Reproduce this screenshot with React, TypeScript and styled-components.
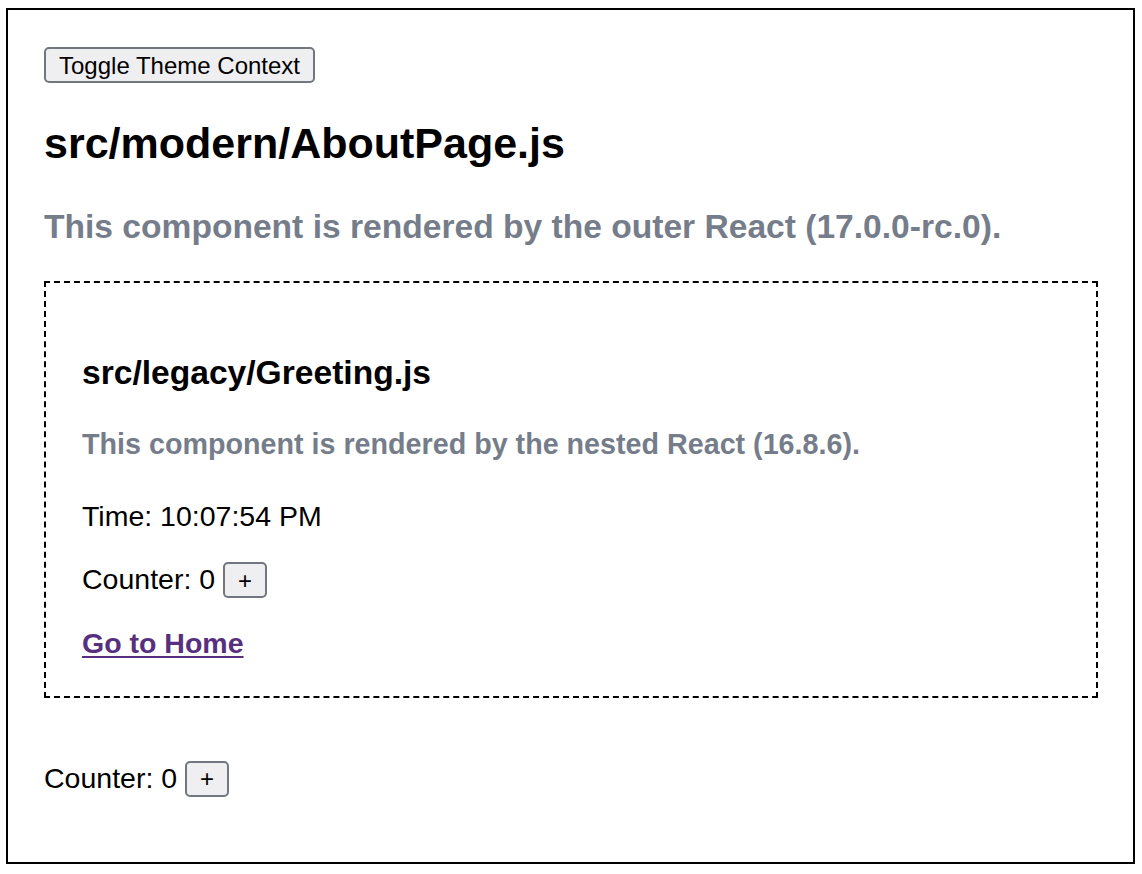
import React, { useState } from "react";
import styled, { createGlobalStyle } from "styled-components";

const GlobalStyle = createGlobalStyle`
  html, body {
    margin: 0;
    padding: 0;
    background: #ffffff;
  }
  body {
    font-family: "Liberation Sans", Arial, Helvetica, sans-serif;
    color: #000000;
  }
`;

const Frame = styled.div`
  box-sizing: border-box;
  width: 1129px;
  margin: 8px 0 0 6px;
  border: 2px solid #000000;
  padding: 36px 35px 37px 36px;
  font-size: 28.5px;
  line-height: 33px;
`;

const Toolbar = styled.div`
  display: flex;
  margin-top: 1px;
`;

const NativeButton = styled.button<{ $size?: "wide" | "small" }>`
  box-sizing: border-box;
  height: 36px;
  padding: 0 13px;
  font-family: "Liberation Sans", Arial, Helvetica, sans-serif;
  font-size: 24px;
  line-height: 27px;
  color: #000000;
  background: #efeff2;
  border: 2px solid #72777f;
  border-radius: 5px;
  cursor: pointer;
  vertical-align: baseline;
`;

const Title = styled.h2`
  margin: 36px 0 0;
  font-size: 43px;
  line-height: 49px;
  font-weight: 700;
`;

const Subtitle = styled.h3<{ $nested?: boolean }>`
  margin: ${(p) => (p.$nested ? "36px" : "39px")} 0 0;
  font-size: ${(p) => (p.$nested ? "28.7px" : "33.6px")};
  line-height: ${(p) => (p.$nested ? "33px" : "39px")};
  font-weight: 700;
  color: #767d8a;
`;

const Panel = styled.section`
  margin-top: 35px;
  border: 2px dashed #000000;
  padding: 36px;
`;

const PanelTitle = styled.h3`
  margin: 33.6px 0 0;
  font-size: 33.6px;
  line-height: 39px;
  font-weight: 700;
`;

const Line = styled.p<{ $gap: number }>`
  margin: ${(p) => p.$gap}px 0 0;
  font-size: 28.5px;
  line-height: 33px;
`;

const LinkRow = styled.div`
  margin-top: 28.5px;
  font-size: 28.5px;
  line-height: 33px;
`;

const HomeLink = styled.a`
  color: #56307e;
  font-weight: 700;
  text-decoration: underline;
  text-decoration-thickness: 2px;
  text-underline-offset: 3px;
`;

const OuterCounter = styled.p`
  margin: 63px 0 28.5px;
  font-size: 28.5px;
  line-height: 33px;
`;

function Counter({ gap }: { gap: number }) {
  const [count, setCount] = useState(0);
  return (
    <Line $gap={gap}>
      Counter: {count}{" "}
      <NativeButton $size="small" onClick={() => setCount(count + 1)}>
        +
      </NativeButton>
    </Line>
  );
}

export default function App() {
  const [count, setCount] = useState(0);
  return (
    <>
      <GlobalStyle />
      <Frame>
        <Toolbar>
          <NativeButton $size="wide">Toggle Theme Context</NativeButton>
        </Toolbar>
        <Title>src/modern/AboutPage.js</Title>
        <Subtitle>
          This component is rendered by the outer React (17.0.0-rc.0).
        </Subtitle>
        <Panel>
          <PanelTitle>src/legacy/Greeting.js</PanelTitle>
          <Subtitle $nested>
            This component is rendered by the nested React (16.8.6).
          </Subtitle>
          <Line $gap={39}>Time: 10:07:54 PM</Line>
          <Counter gap={29.5} />
          <LinkRow>
            <HomeLink href="#/">Go to Home</HomeLink>
          </LinkRow>
        </Panel>
        <OuterCounter>
          Counter: {count}{" "}
          <NativeButton $size="small" onClick={() => setCount(count + 1)}>
            +
          </NativeButton>
        </OuterCounter>
      </Frame>
    </>
  );
}
